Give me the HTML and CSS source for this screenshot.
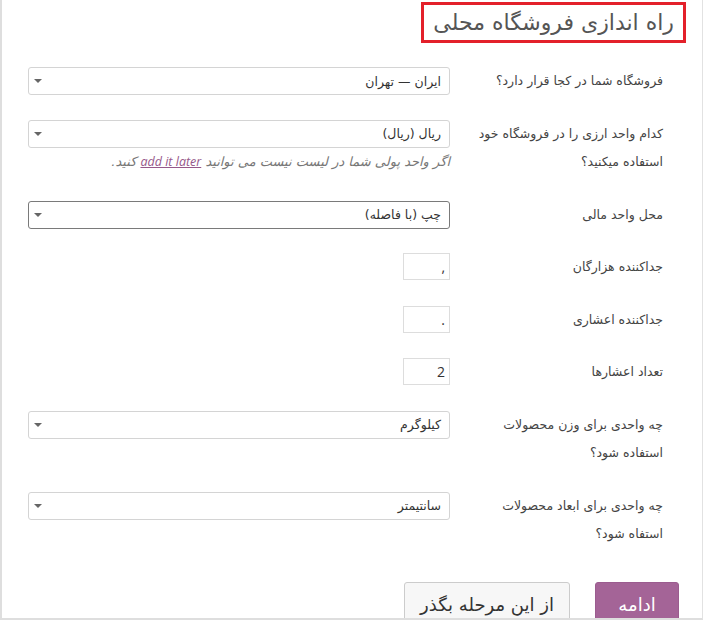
FILE: index.html
```html
<!DOCTYPE html>
<html lang="fa" dir="rtl">
<head>
  <meta charset="UTF-8" />
  <meta name="viewport" content="width=device-width, initial-scale=1.0" />
  <title>راه اندازی فروشگاه</title>
  <link rel="stylesheet" href="styles.css">
</head>
<body>
  <div id="card">
    <div class="title-bar">
      <h1 class="title">راه اندازی فروشگاه محلی</h1>
    </div>

    <div id="setupForm">
      <div class="row">
        <label class="lbl">فروشگاه شما در کجا قرار دارد؟</label>
        <div class="field">
          <div class="select"><span>ایران — تهران</span><i class="arrow"></i></div>
        </div>
      </div>

      <div class="row">
        <label class="lbl">کدام واحد ارزی را در فروشگاه خود<br>استفاده میکنید؟</label>
        <div class="field">
          <div class="select"><span>ریال (ریال)</span><i class="arrow"></i></div>
          <p class="desc">اگر واحد پولی شما در لیست نیست می توانید <a href="#">add it later</a> کنید.</p>
        </div>
      </div>

      <div class="row">
        <label class="lbl">محل واحد مالی</label>
        <div class="field">
          <div class="select focused"><span>چپ (با فاصله)</span><i class="arrow"></i></div>
        </div>
      </div>

      <div class="row">
        <label class="lbl">جداکننده هزارگان</label>
        <div class="field">
          <div class="small-input">,</div>
        </div>
      </div>

      <div class="row">
        <label class="lbl">جداکننده اعشاری</label>
        <div class="field">
          <div class="small-input">.</div>
        </div>
      </div>

      <div class="row">
        <label class="lbl">تعداد اعشارها</label>
        <div class="field">
          <div class="small-input">2</div>
        </div>
      </div>

      <div class="row">
        <label class="lbl">چه واحدی برای وزن محصولات<br>استفاده شود؟</label>
        <div class="field">
          <div class="select"><span>کیلوگرم</span><i class="arrow"></i></div>
        </div>
      </div>

      <div class="row">
        <label class="lbl">چه واحدی برای ابعاد محصولات<br>استفاه شود؟</label>
        <div class="field">
          <div class="select"><span>سانتیمتر</span><i class="arrow"></i></div>
        </div>
      </div>
    </div>

    <div class="actions">
      <button class="btn btn-primary">ادامه</button>
      <button class="btn btn-skip">از این مرحله بگذر</button>
    </div>
  </div>
</body>
</html>
```

FILE: styles.css
```css
body {
  margin: 0;
  background-color: #fff;
  font-family: "DejaVu Sans", sans-serif;
  direction: rtl;
}

#card {
  width: 700px;
  height: 618px;
  margin-right: auto;
  background-color: #fff;
  border-left: 2px solid #dedede;
  border-right: 1px solid #e2e2e2;
  border-bottom: 2px solid #dedede;
  overflow: hidden;
}

.title-bar {
  display: flex;
  padding: 2px 16px 0 0;
}

.title {
  margin: 0;
  padding: 0 9px 0 9px;
  border: 3px solid #e3202a;
  font-size: 22px;
  font-weight: normal;
  line-height: 35px;
  color: #555;
}

#setupForm {
  margin-top: 24px;
  display: flex;
  flex-direction: column;
  gap: 24px;
  padding-right: 39px;
}

.row {
  display: grid;
  grid-template-columns: 186px 422px;
  column-gap: 27px;
  align-items: start;
}

.lbl {
  font-size: 12.5px;
  line-height: 28.5px;
  color: #444;
}

.field {
  display: flex;
  flex-direction: column;
}

.select {
  height: 26px;
  border: 1px solid #d4d4d4;
  border-radius: 3px;
  background: #fff;
  display: flex;
  align-items: center;
  justify-content: space-between;
  padding: 0 8px 0 5px;
  font-size: 12.5px;
  color: #333;
}

.select.focused {
  border-color: #7a7a7a;
}

.arrow {
  width: 0;
  height: 0;
  border-left: 4px solid transparent;
  border-right: 4px solid transparent;
  border-top: 4px solid #666;
}

.desc {
  margin: 4px 0 0 0;
  font-size: 13px;
  line-height: 20px;
  font-style: italic;
  color: #777;
}

.desc a {
  color: #96588a;
  text-decoration: underline;
  font-family: "Open Sans", sans-serif;
  font-size: 12.5px;
}

.small-input {
  width: 37px;
  height: 25px;
  border: 1px solid #ddd;
  padding: 0 4px;
  line-height: 25px;
  font-size: 14px;
  color: #333;
  font-family: "Open Sans", sans-serif;
}

.actions {
  display: flex;
  gap: 25px;
  margin-top: 33px;
  padding-right: 23px;
}

.btn {
  height: 46px;
  border-radius: 3px;
  font-family: "DejaVu Sans", sans-serif;
  font-size: 18px;
  padding: 0;
  cursor: pointer;
}

.btn-primary {
  width: 84px;
  background-color: #a46497;
  border: 1px solid #9b5c8f;
  color: #fff;
}

.btn-skip {
  width: 166px;
  background-color: #f7f7f7;
  border: 1px solid #ccc;
  color: #333;
}
```
